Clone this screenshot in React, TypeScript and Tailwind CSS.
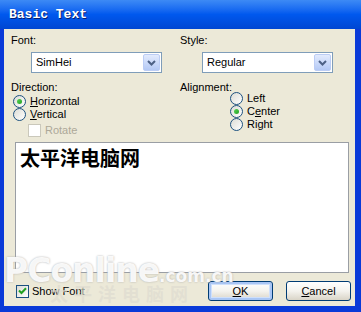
const ui = { fontFamily: '"Liberation Sans", Arial, sans-serif' };

function Chevron() {
  return (
    <svg width="9" height="6" viewBox="0 0 9 6" fill="none">
      <path d="M1 1l3.5 3.5L8 1" stroke="#4d6185" strokeWidth="2" />
    </svg>
  );
}

function Select({ value }: { value: string }) {
  return (
    <div className="flex h-[21px] w-[131px] border border-[#7f9db9] bg-white">
      <span className="flex-1 pl-[4px] text-[11px] leading-[19px] text-black">{value}</span>
      <span className="m-[1px] flex w-[17px] items-center justify-center rounded-[2px] border border-[#bccdf5] bg-gradient-to-b from-[#e3ebfd] to-[#b4c9f5]">
        <Chevron />
      </span>
    </div>
  );
}

function Radio({ checked, children }: { checked?: boolean; children: React.ReactNode }) {
  return (
    <div className="flex h-[13px] items-center">
      <span className="flex h-[13px] w-[13px] items-center justify-center rounded-full border border-[#1c5180] bg-gradient-to-br from-[#dcdcd5] to-white">
        {checked && <span className="h-[5px] w-[5px] rounded-full bg-gradient-to-br from-[#55d355] to-[#21a121]" />}
      </span>
      <span className="ml-[4px] text-[11px] leading-[13px] text-black">{children}</span>
    </div>
  );
}

function Check() {
  return (
    <svg width="9" height="8" viewBox="0 0 9 8" fill="none">
      <path d="M1 3.5l2.5 2.5L8 1.2" stroke="#21a121" strokeWidth="2" />
    </svg>
  );
}

function Button({ children, primary }: { children: React.ReactNode; primary?: boolean }) {
  return (
    <div
      className={`flex h-[20px] w-[65px] items-center justify-center rounded-[3px] border border-[#003c74] bg-gradient-to-b from-white via-[#f4f3ee] to-[#d9d4c7] text-[11px] text-black ${
        primary ? 'shadow-[inset_0_0_0_2px_#a9c6f5,inset_0_0_0_3px_#cfe0fb]' : ''
      }`}
    >
      {children}
    </div>
  );
}

export default function App() {
  return (
    <div className="relative h-[312px] w-[361px] overflow-hidden bg-[#0a3ad8]" style={ui}>
      {/* title bar */}
      <div className="flex h-[29px] items-center bg-gradient-to-b from-[#3d8af5] via-[#0058ee] to-[#0046d2] pl-[9px]">
        <span
          className="text-[13px] font-bold text-white [text-shadow:1px_1px_0_#0a1e6e]"
          style={{ fontFamily: '"Liberation Mono", "Courier New", monospace' }}
        >
          Basic Text
        </span>
      </div>

      {/* client area */}
      <div className="ml-[4px] mr-[6px] flex h-[277px] flex-col bg-[#ece9d8] pt-[5px]">
        <div className="flex">
          <div className="ml-[7px] w-[151px]">
            <div className="h-[13px] text-[11px] leading-[13px]">Font:</div>
            <div className="ml-[20px] mt-[5px]">
              <Select value="SimHei" />
            </div>
          </div>
          <div className="ml-[18px] w-[153px]">
            <div className="h-[13px] text-[11px] leading-[13px]">Style:</div>
            <div className="ml-[22px] mt-[5px]">
              <Select value="Regular" />
            </div>
          </div>
        </div>

        <div className="mt-[8px] flex">
          <div className="ml-[7px] w-[151px]">
            <div className="h-[13px] text-[11px] leading-[13px]">Direction:</div>
            <div className="ml-[2px] mt-[1px]">
              <Radio checked>
                <u>H</u>orizontal
              </Radio>
              <Radio>
                <u>V</u>ertical
              </Radio>
            </div>
            <div className="ml-[17px] mt-[3px] flex h-[13px] items-center">
              <span className="h-[13px] w-[13px] border border-[#cac8bb] bg-white" />
              <span className="ml-[4px] text-[11px] text-[#aca899]">Rotate</span>
            </div>
          </div>
          <div className="ml-[18px] w-[153px]">
            <div className="h-[13px] text-[11px] leading-[13px]">Alignment:</div>
            <div className="ml-[50px] mt-[-2px]">
              <Radio>Left</Radio>
              <Radio checked>
                C<u>e</u>nter
              </Radio>
              <Radio>Right</Radio>
            </div>
          </div>
        </div>

        {/* preview */}
        <div className="ml-[11px] mt-[5px] h-[131px] w-[334px] border border-[#9a9ea4] bg-white pl-[4px] pt-[4px]">
          <span
            className="text-[20px] font-bold leading-[22px] text-black"
            style={{ fontFamily: '"Noto Sans CJK SC", sans-serif' }}
          >
            太平洋电脑网
          </span>
        </div>

        <div className="mt-[8px] flex items-center">
          <div className="ml-[12px] flex items-center">
            <span className="flex h-[13px] w-[13px] items-center justify-center border border-[#1c5180] bg-gradient-to-br from-[#dcdcd5] to-white">
              <Check />
            </span>
            <span className="ml-[3px] text-[11px]">Show Font</span>
          </div>
          <div className="ml-auto mr-[4px] flex gap-[13px]">
            <Button primary>
              <u>O</u>K
            </Button>
            <Button>
              <u>C</u>ancel
            </Button>
          </div>
        </div>
      </div>

      {/* watermark */}
      <div className="pointer-events-none absolute left-[4px] top-[246px] flex items-baseline text-white/90 [text-shadow:0_0_2px_#a8a8a8]">
        <span className="text-[33px] font-bold tracking-[-1px]" style={{ fontFamily: '"DejaVu Sans", sans-serif' }}>
          PConline
        </span>
        <span className="text-[17px] font-bold" style={{ fontFamily: '"DejaVu Sans", sans-serif' }}>
          .com.cn
        </span>
      </div>
      <div
        className="pointer-events-none absolute left-[50px] top-[280px] text-[18px] font-bold tracking-[6px] text-[#dedbd0]/70"
        style={{ fontFamily: '"Noto Sans CJK SC", sans-serif' }}
      >
        太平洋电脑网
      </div>
    </div>
  );
}
